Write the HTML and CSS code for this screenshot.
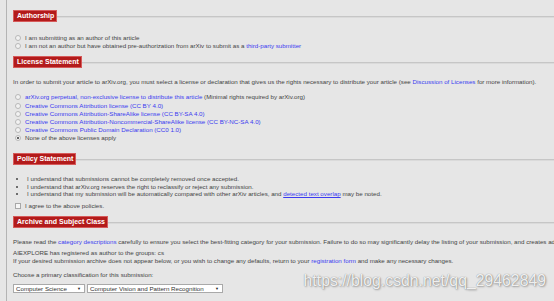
FILE: index.html
```html
<!DOCTYPE html>
<html lang="en">
<head>
  <meta charset="UTF-8" />
  <title>arXiv submission - Start</title>
  <link rel="stylesheet" href="styles.css">
</head>
<body>
  <div class="page">
    <div class="section-head"><span class="label">Authorship</span><span class="rule"></span></div>
    <div class="options first">
      <div class="option"><span class="radio"></span>I am submitting as an author of this article</div>
      <div class="option"><span class="radio"></span>I am not an author but have obtained pre-authorization from arXiv to submit as a&nbsp;<a href="#">third-party submitter</a></div>
    </div>

    <div class="section-head"><span class="label">License Statement</span><span class="rule"></span></div>
    <p class="text">In order to submit your article to arXiv.org, you must select a license or declaration that gives us the rights necessary to distribute your article (see <a href="#">Discussion of Licenses</a> for more information).</p>
    <div class="options licenses">
      <div class="option"><span class="radio"></span><a href="#">arXiv.org perpetual, non-exclusive license to distribute this article</a>&nbsp;(Minimal rights required by arXiv.org)</div>
      <div class="option"><span class="radio"></span><a href="#">Creative Commons Attribution license (CC BY 4.0)</a></div>
      <div class="option"><span class="radio"></span><a href="#">Creative Commons Attribution-ShareAlike license (CC BY-SA 4.0)</a></div>
      <div class="option"><span class="radio"></span><a href="#">Creative Commons Attribution-Noncommercial-ShareAlike license (CC BY-NC-SA 4.0)</a></div>
      <div class="option"><span class="radio"></span><a href="#">Creative Commons Public Domain Declaration (CC0 1.0)</a></div>
      <div class="option"><span class="radio checked"></span>None of the above licenses apply</div>
    </div>

    <div class="section-head"><span class="label">Policy Statement</span><span class="rule"></span></div>
    <ul class="policies">
      <li>I understand that submissions cannot be completely removed once accepted.</li>
      <li>I understand that arXiv.org reserves the right to reclassify or reject any submission.</li>
      <li>I understand that my submission will be automatically compared with other arXiv articles, and <a href="#" class="under">detected text overlap</a> may be noted.</li>
    </ul>
    <div class="option agree"><span class="checkbox"></span>I agree to the above policies.</div>

    <div class="section-head"><span class="label">Archive and Subject Class</span><span class="rule"></span></div>
    <p class="text">Please read the <a href="#">category descriptions</a> carefully to ensure you select the best-fitting category for your submission. Failure to do so may significantly delay the listing of your submission, and creates additional work for our moderators.</p>
    <p class="text groups">AIEXPLORE has registered as author to the groups: cs<br>If your desired submission archive does not appear below, or you wish to change any defaults, return to your <a href="#">registration form</a> and make any necessary changes.</p>
    <p class="text choose">Choose a primary classification for this submission:</p>
    <div class="selects">
      <div class="select archive"><span>Computer Science</span><span class="arrow">&#9660;</span></div>
      <div class="select subject"><span>Computer Vision and Pattern Recognition</span><span class="arrow">&#9660;</span></div>
    </div>
  </div>

  <div class="watermark">https://blog.csdn.net/qq_29462849</div>
</body>
</html>
```

FILE: styles.css
```css
body {
  margin: 0;
  padding: 0;
  background: #e6e6e6;
  color: #444;
  font-family: "Liberation Sans", Arial, sans-serif;
  font-size: 6.2px;
  overflow: hidden;
  width: 554px;
  height: 301px;
  position: relative;
}

a {
  color: #3b3bf0;
  text-decoration: none;
}

a.under {
  text-decoration: underline;
}

.page {
  margin-left: 6px;
  border-left: 1px solid #b4b4b4;
  padding: 10px 0 0 6px;
  width: 760px;
  min-height: 301px;
  white-space: nowrap;
}

.section-head {
  display: flex;
  align-items: center;
  height: 12px;
}

.label {
  background: #b31b1b;
  color: #fff;
  font-weight: bold;
  font-size: 7px;
  line-height: 10px;
  padding: 0 2px 0 3px;
  border: 1px solid #d65a5a;
  box-sizing: border-box;
  height: 12px;
}

.rule {
  flex: 1;
  height: 0;
  border-top: 1px solid #c6c6c6;
  border-bottom: 1px solid #dadada;
  margin-top: 2px;
}

.options {
  margin-left: 2px;
}

.options.first {
  margin-top: 12px;
  margin-bottom: 6px;
}

.options.licenses {
  margin-top: 7px;
  margin-bottom: 10.5px;
}

.option {
  display: flex;
  align-items: center;
  height: 8.2px;
  line-height: 8px;
}

.radio {
  width: 4px;
  height: 4px;
  border: 1px solid #b8b8b8;
  border-radius: 50%;
  background: #f2f2f2;
  margin-right: 4px;
  position: relative;
}

.radio.checked::after {
  content: "";
  position: absolute;
  left: 1px;
  top: 1px;
  width: 2px;
  height: 2px;
  border-radius: 50%;
  background: #333;
}

.checkbox {
  width: 4px;
  height: 4px;
  border: 1px solid #a8a8a8;
  background: #f6f6f6;
  margin-right: 4px;
}

.text {
  margin: 10px 0 0;
  line-height: 8px;
}

.policies {
  margin: 10px 0 0;
  padding-left: 14px;
  line-height: 7.7px;
}

.policies li {
  list-style: disc;
}

.agree {
  margin: 4px 0 6px 2px;
}

.groups {
  margin-top: 3px;
}

.choose {
  margin-top: 6px;
}

.selects {
  display: flex;
  gap: 2px;
  margin-top: 5px;
}

.select {
  display: flex;
  justify-content: space-between;
  align-items: center;
  height: 9px;
  box-sizing: border-box;
  background: #fff;
  border: 1px solid #a9a9a9;
  padding: 0 3px 0 2px;
  color: #333;
}

.select.archive {
  width: 72px;
}

.select.subject {
  width: 136px;
}

.arrow {
  font-size: 4px;
  color: #222;
}

.watermark {
  position: absolute;
  right: 8px;
  top: 271px;
  font-family: "Liberation Sans", Arial, sans-serif;
  font-size: 15.8px;
  line-height: 20px;
  color: rgba(255, 255, 255, 0.9);
  text-shadow: 0 0 1px rgba(0, 0, 0, 0.45), 1px 1px 2px rgba(0, 0, 0, 0.3);
  white-space: nowrap;
}
```
